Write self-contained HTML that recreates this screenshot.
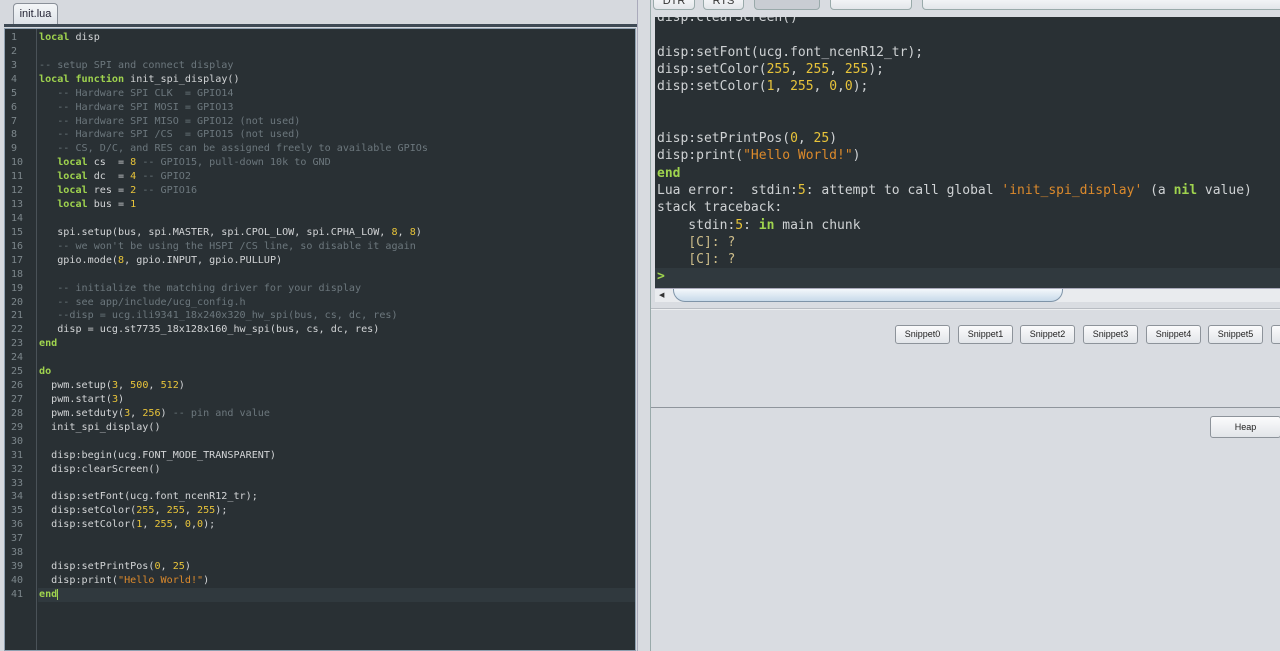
<!DOCTYPE html>
<html><head><meta charset="utf-8"><style>
*{margin:0;padding:0;box-sizing:border-box}
body{width:1280px;height:651px;overflow:hidden;background:#d9dce1;font-family:"Liberation Sans",sans-serif;position:relative}
.k{color:#9fd34e;font-weight:bold}
.c{color:#6c777d}
.n{color:#e8c43a}
.s{color:#dc8a2c}
pre{font-family:"DejaVu Sans Mono","Liberation Mono",monospace;white-space:pre}
#left{position:absolute;left:0;top:0;width:637px;height:651px;background:#d6d9de}
#tab{position:absolute;left:13px;top:3px;width:45px;height:22px;border:1px solid #8a9099;border-bottom:none;border-radius:4px 4px 0 0;background:linear-gradient(#f4f6f8,#dde2e8);font-size:11px;color:#223;text-align:center;line-height:21px}
#tabline{position:absolute;left:4px;top:24px;width:633px;height:3px;background:#3f4a55}
#ed{position:absolute;left:4px;top:28px;width:632px;height:623px;background:#293034;border:1px solid #8fa0b0}
#gut{position:absolute;left:0;top:0;width:32px;height:100%;border-right:1px solid #4a5258}
#gut pre{color:#7d878c;font-size:10px;line-height:13.92px;padding-top:2px;padding-left:6px}
#code{position:absolute;left:34px;top:0}
#code pre{color:#d2d4d6;font-size:10.1px;line-height:13.92px;padding-top:2px}
#hl{position:absolute;left:33px;top:559px;width:597px;height:14px;background:#30393e}
#split{position:absolute;left:637px;top:0;width:14px;height:651px;background:#d8dbe0;border-left:1px solid #aab;border-right:1px solid #9aa}
#right{position:absolute;left:651px;top:0;width:629px;height:651px;background:#d9dce1}
.tb{position:absolute;top:-6px;height:16px;border:1px solid #9aa;border-radius:4px;background:linear-gradient(#fafbfc,#e3e6ea);font-size:11px;text-align:center;line-height:12px;color:#333}
#con{position:absolute;left:4px;top:17px;width:625px;height:271px;background:#293034;overflow:hidden}
#con pre{color:#cfd2d4;font-size:13px;line-height:17.3px;position:absolute;left:2px;top:-8px}
#sb{position:absolute;left:4px;top:288px;width:625px;height:14px;background:#e9ebee;border-top:1px solid #aab}
#thumb{position:absolute;left:18px;top:0;width:390px;height:13px;border:1px solid #7f94a8;border-top:none;border-radius:0 0 12px 12px;background:linear-gradient(#f3f7fb,#c8daea)}
.btn{position:absolute;top:325px;width:55px;height:19px;border:1px solid #8d939a;border-radius:3px;background:linear-gradient(#fbfbfc,#e2e5e9);font-size:9px;text-align:center;line-height:17px;color:#222}
</style></head><body>
<div id="left">
<div id="tab">init.lua</div>
<div id="tabline"></div>
<div id="ed">
<div id="hl"></div>
<div id="gut"><pre>1
2
3
4
5
6
7
8
9
10
11
12
13
14
15
16
17
18
19
20
21
22
23
24
25
26
27
28
29
30
31
32
33
34
35
36
37
38
39
40
41</pre></div>
<div id="code"><pre><span class="k">local</span> disp

<span class="c">-- setup SPI and connect display</span>
<span class="k">local</span> <span class="k">function</span> init_spi_display()
   <span class="c">-- Hardware SPI CLK  = GPIO14</span>
   <span class="c">-- Hardware SPI MOSI = GPIO13</span>
   <span class="c">-- Hardware SPI MISO = GPIO12 (not used)</span>
   <span class="c">-- Hardware SPI /CS  = GPIO15 (not used)</span>
   <span class="c">-- CS, D/C, and RES can be assigned freely to available GPIOs</span>
   <span class="k">local</span> cs  = <span class="n">8</span> <span class="c">-- GPIO15, pull-down 10k to GND</span>
   <span class="k">local</span> dc  = <span class="n">4</span> <span class="c">-- GPIO2</span>
   <span class="k">local</span> res = <span class="n">2</span> <span class="c">-- GPIO16</span>
   <span class="k">local</span> bus = <span class="n">1</span>

   spi.setup(bus, spi.MASTER, spi.CPOL_LOW, spi.CPHA_LOW, <span class="n">8</span>, <span class="n">8</span>)
   <span class="c">-- we won't be using the HSPI /CS line, so disable it again</span>
   gpio.mode(<span class="n">8</span>, gpio.INPUT, gpio.PULLUP)

   <span class="c">-- initialize the matching driver for your display</span>
   <span class="c">-- see app/include/ucg_config.h</span>
   <span class="c">--disp = ucg.ili9341_18x240x320_hw_spi(bus, cs, dc, res)</span>
   disp = ucg.st7735_18x128x160_hw_spi(bus, cs, dc, res)
<span class="k">end</span>

<span class="k">do</span>
  pwm.setup(<span class="n">3</span>, <span class="n">500</span>, <span class="n">512</span>)
  pwm.start(<span class="n">3</span>)
  pwm.setduty(<span class="n">3</span>, <span class="n">256</span>) <span class="c">-- pin and value</span>
  init_spi_display()

  disp:begin(ucg.FONT_MODE_TRANSPARENT)
  disp:clearScreen()

  disp:setFont(ucg.font_ncenR12_tr);
  disp:setColor(<span class="n">255</span>, <span class="n">255</span>, <span class="n">255</span>);
  disp:setColor(<span class="n">1</span>, <span class="n">255</span>, <span class="n">0</span>,<span class="n">0</span>);


  disp:setPrintPos(<span class="n">0</span>, <span class="n">25</span>)
  disp:print(<span class="s">"Hello World!"</span>)
<span class="k">end</span><span style="border-left:1px solid #9fd34e"></span></pre></div>
</div>
</div>
<div id="split"></div>
<div id="right">
<div class="tb" style="left:2px;width:42px">DTR</div>
<div class="tb" style="left:52px;width:41px">RTS</div>
<div class="tb" style="left:103px;width:66px;background:#c9cdd3"></div>
<div class="tb" style="left:179px;width:82px"></div>
<div class="tb" style="left:271px;width:370px"></div>
<div id="con">
<div style="position:absolute;left:0;top:251px;width:625px;height:20px;background:#30393e"></div>
<pre>disp:clearScreen()

disp:setFont(ucg.font_ncenR12_tr);
disp:setColor(<span class="n">255</span>, <span class="n">255</span>, <span class="n">255</span>);
disp:setColor(<span class="n">1</span>, <span class="n">255</span>, <span class="n">0</span>,<span class="n">0</span>);


disp:setPrintPos(<span class="n">0</span>, <span class="n">25</span>)
disp:print(<span class="s">"Hello World!"</span>)
<span class="k">end</span>
Lua error:  stdin:<span class="n">5</span>: attempt to call global <span class="s">'init_spi_display'</span> (a <span class="k">nil</span> value)
stack traceback:
    stdin:<span class="n">5</span>: <span class="k">in</span> main chunk
    <span style="color:#cdbd8a">[C]: ?</span>
    <span style="color:#cdbd8a">[C]: ?</span>
<span class="k">&gt;</span></pre>
</div>
<div id="sb"><span style="position:absolute;left:4px;top:2px;font-size:7px;color:#333">◀</span><div id="thumb"></div></div>
<div style="position:absolute;left:0;top:308px;width:629px;height:2px;border-top:1px solid #b8bcc2;background:#eceef0"></div>
<div class="btn" style="left:244px">Snippet0</div>
<div class="btn" style="left:307px">Snippet1</div>
<div class="btn" style="left:369px">Snippet2</div>
<div class="btn" style="left:432px">Snippet3</div>
<div class="btn" style="left:495px">Snippet4</div>
<div class="btn" style="left:557px">Snippet5</div>
<div class="btn" style="left:620px">Snippet6</div>
<div style="position:absolute;left:0;top:407px;width:629px;height:1px;background:#8f959c"></div>
<div class="btn" style="left:559px;top:416px;width:71px;height:22px;line-height:20px">Heap</div>
</div>
</body></html>
